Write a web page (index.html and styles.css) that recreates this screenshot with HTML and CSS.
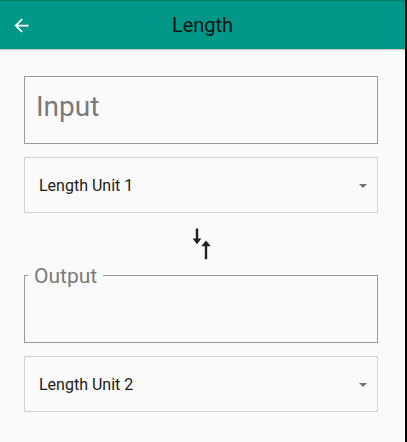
FILE: index.html
```html
<!DOCTYPE html>
<html>
<head>
<meta charset="utf-8">
<link rel="stylesheet" href="styles.css">
</head>
<body>
<div class="app">
  <div class="status"></div>
  <header class="appbar">
    <svg class="back" viewBox="0 0 24 24" width="21" height="21"><path fill="#fff" d="M20 11H7.83l5.59-5.59L12 4l-8 8 8 8 1.41-1.41L7.83 13H20v-2z"/></svg>
    <h1 class="title">Length</h1>
  </header>
  <main class="content">
    <div class="field input-field"><span class="placeholder">Input</span></div>
    <div class="dropdown">
      <span class="dd-text">Length Unit 1</span>
      <svg class="dd-arrow" viewBox="0 0 8 4" width="8" height="4"><path fill="#707070" d="M0 0h8L4 4z"/></svg>
    </div>
    <div class="swap-row">
      <svg class="swap" viewBox="0 0 24 32" width="24" height="32">
        <rect x="5.8" y="0.5" width="2.4" height="11" fill="#212121"/>
        <path d="M2.6 10.5h8.8L7 16.3z" fill="#212121"/>
        <path d="M11.2 18.3h9.6L16 12.5z" fill="#212121"/>
        <rect x="14.8" y="17.5" width="2.4" height="13.7" fill="#212121"/>
      </svg>
    </div>
    <div class="field output-field"><span class="label">Output</span></div>
    <div class="dropdown">
      <span class="dd-text">Length Unit 2</span>
      <svg class="dd-arrow" viewBox="0 0 8 4" width="8" height="4"><path fill="#707070" d="M0 0h8L4 4z"/></svg>
    </div>
  </main>
</div>
</body>
</html>
```

FILE: styles.css
```css
html, body {
  margin: 0;
  padding: 0;
  background: #000;
}
.app {
  width: 405px;
  height: 442px;
  background: #fafafa;
  font-family: Roboto, "Liberation Sans", sans-serif;
  overflow: hidden;
}
.status {
  height: 1px;
  background: #00796b;
}
.appbar {
  height: 48px;
  background: #009688;
  display: flex;
  align-items: center;
  position: relative;
  box-shadow: 0 1px 1px rgba(0, 0, 0, 0.18);
}
.back {
  position: absolute;
  left: 10.5px;
  top: 14px;
}
.title {
  margin: 0;
  flex: 1;
  text-align: center;
  font-size: 20px;
  font-weight: 400;
  color: rgba(0, 0, 0, 0.87);
  line-height: 1;
}
.content {
  display: flex;
  flex-direction: column;
  margin-left: 24px;
  width: 354px;
  padding-top: 27px;
}
.field {
  box-sizing: border-box;
  height: 68px;
  border: 1px solid #9a9a9a;
  position: relative;
}
.input-field {
  padding: 16px 11px 0;
}
.placeholder {
  display: block;
  font-size: 28px;
  line-height: 28px;
  color: #7a7a7a;
}
.output-field {
  margin-bottom: 13px;
}
.label {
  position: absolute;
  left: 3px;
  top: -10px;
  padding: 0 6px;
  background: #fafafa;
  font-size: 21px;
  line-height: 21px;
  color: #7a7a7a;
}
.dropdown {
  box-sizing: border-box;
  height: 56px;
  border: 1px solid #d2d2d2;
  display: flex;
  align-items: flex-start;
  padding: 20px 10px 0 14px;
}
.input-field + .dropdown {
  margin-top: 13px;
}
.dd-text {
  flex: 1;
  font-size: 16px;
  line-height: 16px;
  color: #1a1a1a;
}
.dd-arrow {
  margin-top: 6px;
}
.swap-row {
  height: 62px;
  display: flex;
  align-items: center;
  justify-content: center;
}
.swap {
  margin-left: 1px;
}
```
